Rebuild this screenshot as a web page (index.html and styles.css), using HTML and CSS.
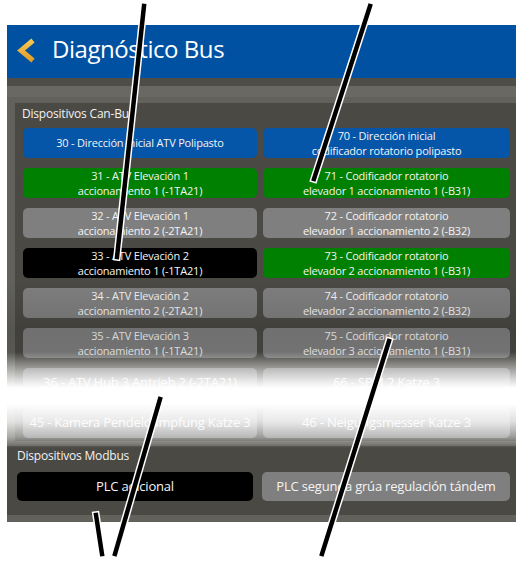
FILE: index.html
```html
<!DOCTYPE html>
<html lang="es">
<head>
    <meta charset="UTF-8">
    <meta name="viewport" content="width=device-width, initial-scale=1.0">
    <title>Diagnóstico Bus</title>
    <link rel="stylesheet" href="styles.css">
</head>
<body>
    <div class="sheet">
        <div class="screen">
            <header class="topbar">
                <svg class="back" width="22" height="30" viewBox="0 0 22 30">
                    <defs>
                        <linearGradient id="backGrad" x1="0" y1="0" x2="0" y2="1">
                            <stop offset="0" stop-color="#f7c650"/>
                            <stop offset="1" stop-color="#e39d25"/>
                        </linearGradient>
                    </defs>
                    <polyline points="18,4.5 6,14.5 18,24.5" fill="none" stroke="url(#backGrad)" stroke-width="5"/>
                </svg>
                <h1>Diagnóstico Bus</h1>
            </header>
            <div class="band band-dark"></div>
            <div class="band band-light"></div>

            <main class="content">
                <section class="group group-can">
                    <div class="group-title">Dispositivos Can-Bus</div>
                    <div class="dev-grid">
                        <button class="dev dev-blue one-line">30 - Dirección inicial ATV Polipasto</button>
                        <button class="dev dev-blue">70 - Dirección inicial<br>codificador rotatorio polipasto</button>

                        <button class="dev dev-green">31 - ATV Elevación 1<br>accionamiento 1 (-1TA21)</button>
                        <button class="dev dev-green">71 - Codificador rotatorio<br>elevador 1 accionamiento 1 (-B31)</button>

                        <button class="dev dev-gray">32 - ATV Elevación 1<br>accionamiento 2 (-2TA21)</button>
                        <button class="dev dev-gray">72 - Codificador rotatorio<br>elevador 1 accionamiento 2 (-B32)</button>

                        <button class="dev dev-black">33 - ATV Elevación 2<br>accionamiento 1 (-1TA21)</button>
                        <button class="dev dev-green">73 - Codificador rotatorio<br>elevador 2 accionamiento 1 (-B31)</button>

                        <button class="dev dev-gray">34 - ATV Elevación 2<br>accionamiento 2 (-2TA21)</button>
                        <button class="dev dev-gray">74 - Codificador rotatorio<br>elevador 2 accionamiento 2 (-B32)</button>

                        <button class="dev dev-gray">35 - ATV Elevación 3<br>accionamiento 1 (-1TA21)</button>
                        <button class="dev dev-gray">75 - Codificador rotatorio<br>elevador 3 accionamiento 1 (-B31)</button>

                        <button class="dev dev-gray dev-big">36 - ATV Hub 3 Antrieb 2 (-2TA21)</button>
                        <button class="dev dev-gray dev-big">66 - SPM 2 Katze 3</button>

                        <button class="dev dev-gray dev-big">45 - Kamera Pendeldämpfung Katze 3</button>
                        <button class="dev dev-gray dev-big">46 - Neigungsmesser Katze 3</button>
                    </div>
                </section>

                <section class="group group-modbus">
                    <div class="group-title">Dispositivos Modbus</div>
                    <div class="modbus-grid">
                        <button class="dev dev-black dev-big">PLC adicional</button>
                        <button class="dev dev-gray dev-big">PLC segunda grúa regulación tándem</button>
                    </div>
                </section>

                <!-- faded strip across the lower Can-Bus rows -->
                <div class="fade"></div>
            </main>
        </div>

        <!-- pointer lines drawn over the screen -->
        <svg class="callouts" width="516" height="561" viewBox="0 0 516 561">
            <g stroke="#fff" stroke-width="7.5" stroke-linecap="square">
                <line x1="144" y1="6" x2="117" y2="257"/>
                <line x1="370" y1="6" x2="314" y2="179"/>
                <line x1="389" y1="341" x2="322" y2="554"/>
                <line x1="160" y1="399" x2="115" y2="554"/>
                <line x1="96" y1="515" x2="102" y2="554"/>
            </g>
            <g stroke="#000" stroke-width="4.5" stroke-linecap="square">
                <line x1="144" y1="6" x2="117" y2="257"/>
                <line x1="370" y1="6" x2="314" y2="179"/>
                <line x1="389" y1="341" x2="322" y2="554"/>
                <line x1="160" y1="399" x2="115" y2="554"/>
                <line x1="96" y1="515" x2="102" y2="554"/>
            </g>
        </svg>
    </div>
</body>
</html>
```

FILE: styles.css
```css
body {
    margin: 0;
    background: #fff;
    font-family: 'Open Sans', 'Liberation Sans', sans-serif;
}

.sheet {
    position: relative;
    width: 516px;
    height: 561px;
    overflow: hidden;
}

.screen {
    margin: 25px 0 0 7px;
    width: 509px;
    height: 497px;
    overflow: hidden;
    background: #62615b;
    display: flex;
    flex-direction: column;
}

/* title bar */
.topbar {
    height: 53px;
    flex: none;
    background: #0051a2;
    display: flex;
    align-items: flex-start;
}

.back {
    margin: 11px 0 0 8px;
    flex: none;
}

.topbar h1 {
    margin: 8px 0 0 15px;
    font-size: 24px;
    line-height: 32px;
    font-weight: normal;
    letter-spacing: -0.45px;
    color: #fff;
}

.band {
    flex: none;
}

.band-dark {
    height: 8px;
    background: #4f4d48;
}

.band-light {
    height: 11px;
    background: #6a6862;
}

/* device lists */
.content {
    position: relative;
    flex: 1;
}

.group {
    background: #4a4944;
}

.group-can {
    margin: 6px 0 0 8px;
    padding: 0 0 3px 8px;
}

.group-modbus {
    margin-top: 5px;
    padding: 0 0 14px 10px;
}

.group-title {
    height: 25px;
    line-height: 22px;
    font-size: 12px;
    letter-spacing: -0.2px;
    color: #f2f2f2;
}

.group-can .group-title {
    margin-left: -1px;
}

.group-modbus .group-title {
    height: 26px;
    line-height: 20px;
}

.dev-grid {
    display: grid;
    grid-template-columns: 234px 247px;
    grid-auto-rows: 30px;
    column-gap: 6px;
    row-gap: 10px;
}

.modbus-grid {
    display: grid;
    grid-template-columns: 236px 248px;
    grid-auto-rows: 29px;
    column-gap: 9px;
}

.dev {
    margin: 0;
    padding: 0;
    border: none;
    border-radius: 5px;
    font-family: inherit;
    font-size: 11px;
    line-height: 15px;
    letter-spacing: -0.2px;
    color: #f4f4f4;
    text-align: center;
    white-space: nowrap;
}

.one-line {
    line-height: 30px;
}

.dev-big {
    font-size: 13px;
    line-height: 26px;
    padding-bottom: 2px;
}

.dev-blue {
    background: #0555a8;
}

.dev-green {
    background: #008000;
}

.dev-gray {
    background: #7f7f7f;
}

.dev-black {
    background: #000;
}

.fade {
    position: absolute;
    left: 0;
    right: 0;
    top: 183px;
    height: 168px;
    background: linear-gradient(to bottom,
        rgba(0, 0, 0, 0) 0px,
        rgba(0, 0, 0, 0.12) 50px,
        rgba(0, 0, 0, 0.1) 72px,
        rgba(255, 255, 255, 0.45) 88px,
        rgba(255, 255, 255, 0.8) 100px,
        #fff 108px,
        #fff 124px,
        rgba(255, 255, 255, 0.82) 142px,
        rgba(255, 255, 255, 0.45) 157px,
        rgba(255, 255, 255, 0) 168px);
}

.callouts {
    position: absolute;
    top: 0;
    left: 0;
}
```
